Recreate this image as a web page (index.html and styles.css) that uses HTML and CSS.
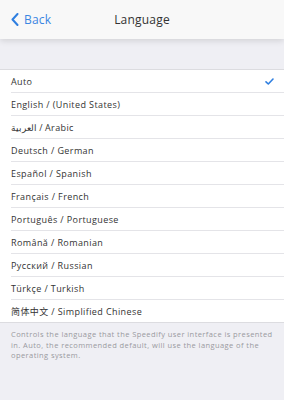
FILE: index.html
```html
<!DOCTYPE html>
<html>
<head>
<meta charset="utf-8">
<link rel="stylesheet" href="styles.css">
</head>
<body>
<header class="topbar">
  <a class="back">
    <svg class="chev" width="8" height="13" viewBox="0 0 8 13"><path d="M6.5 1 L1.5 6.5 L6.5 12" fill="none" stroke="#2f7fe0" stroke-width="2" stroke-linecap="round" stroke-linejoin="round"/></svg>
    <span>Back</span>
  </a>
  <div class="title">Language</div>
</header>
<main class="content">
  <ul class="list">
    <li class="row"><span>Auto</span><svg class="check" width="9" height="7" viewBox="0 0 9 7"><path d="M1 3.8 L3.3 6 L8 1" fill="none" stroke="#2f7fe0" stroke-width="1.6" stroke-linecap="round" stroke-linejoin="round"/></svg></li>
    <li class="row"><span>English / (United States)</span></li>
    <li class="row"><span>العربية / Arabic</span></li>
    <li class="row"><span>Deutsch / German</span></li>
    <li class="row"><span>Español / Spanish</span></li>
    <li class="row"><span>Français / French</span></li>
    <li class="row"><span>Português / Portuguese</span></li>
    <li class="row"><span>Română / Romanian</span></li>
    <li class="row"><span>Русский / Russian</span></li>
    <li class="row"><span>Türkçe / Turkish</span></li>
    <li class="row"><span>简体中文 / Simplified Chinese</span></li>
  </ul>
  <p class="note">Controls the language that the Speedify user interface is presented in. Auto, the recommended default, will use the language of the operating system.</p>
</main>
</body>
</html>
```
FILE: styles.css
```css
html, body {
  margin: 0;
  padding: 0;
  background: #efeff4;
  font-family: "Open Sans", "Noto Sans CJK SC", sans-serif;
  height: 400px;
  overflow: hidden;
}
.topbar {
  height: 39px;
  background: #f8f8f8;
  box-shadow: 0 2px 6px rgba(0,0,0,0.12);
  display: flex;
  align-items: center;
  position: relative;
}
.back {
  display: flex;
  align-items: center;
  gap: 5px;
  padding-left: 11px;
  color: #3a86e2;
  font-size: 12px;
  letter-spacing: 0.2px;
}
.title {
  position: absolute;
  left: 0;
  right: 0;
  text-align: center;
  font-size: 12px;
  letter-spacing: 0.2px;
  color: #333;
  pointer-events: none;
}
.content {
  padding-top: 30px;
}
.list {
  list-style: none;
  margin: 0;
  padding: 0 0 0 11px;
  background: #fff;
  border-top: 1px solid #dcdce0;
  border-bottom: 1px solid #dcdce0;
}
.row {
  height: 22px;
  display: flex;
  align-items: center;
  justify-content: space-between;
  padding-right: 10px;
  font-size: 9px;
  letter-spacing: 0.4px;
  color: #333;
  border-bottom: 1px solid #e4e4e8;
}
.row:last-child {
  border-bottom: none;
}
.note {
  margin: 0;
  padding: 6px 11px;
  font-size: 7.5px;
  letter-spacing: 0.42px;
  line-height: 10.5px;
  color: #9a9aa0;
}
```
